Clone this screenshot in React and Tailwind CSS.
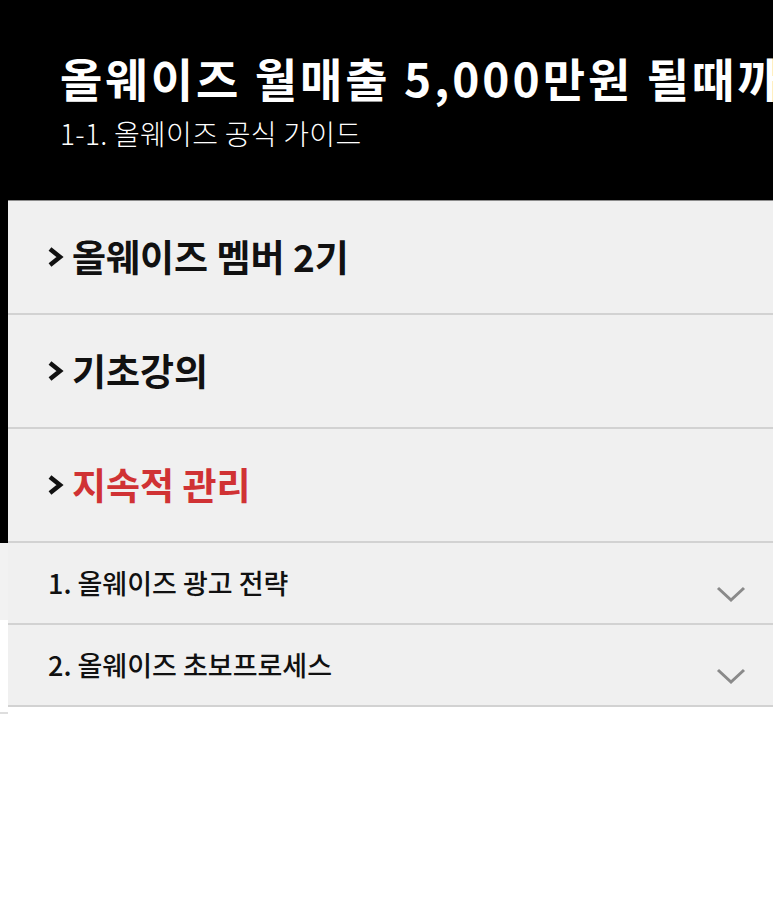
import React from 'react'

const font = { fontFamily: '"Noto Sans CJK KR", "Noto Sans", sans-serif' }

const sections = [
  { id: 1, title: '올웨이즈 멤버 2기', active: false },
  { id: 2, title: '기초강의', active: false },
  { id: 3, title: '지속적 관리', active: true },
]

const lessons = [
  { id: 1, title: '1. 올웨이즈 광고 전략' },
  { id: 2, title: '2. 올웨이즈 초보프로세스' },
]

function Arrow() {
  return (
    <svg width="17" height="22" viewBox="0 0 17 22" className="shrink-0">
      <polyline points="3,3 13,11 3,19" fill="none" stroke="#111" strokeWidth="4.5" strokeLinejoin="miter" />
    </svg>
  )
}

function ChevronDown() {
  return (
    <svg width="30" height="17" viewBox="0 0 30 17" className="shrink-0 mt-[22px]">
      <polyline points="2,2 15,14 28,2" fill="none" stroke="#8a8a8a" strokeWidth="3" />
    </svg>
  )
}

export default function App() {
  return (
    <div className="flex w-[773px] min-h-[902px] bg-white" style={font}>
      {/* left edge strip */}
      <div className="w-[8px] shrink-0 flex flex-col">
        <div className="h-[543px] bg-black" />
        <div className="h-[77px] bg-[#f2f2f2]" />
        <div className="h-[92px] bg-white" />
        <div className="h-[2px] bg-[#dedede]" />
      </div>

      <div className="flex-1 min-w-0 flex flex-col">
        <div className="h-[200px] bg-black overflow-hidden pl-[52px] pt-[50px]">
          <h1 className="text-[46px] leading-[54px] font-bold tracking-[3px] text-white whitespace-nowrap">
            올웨이즈 월매출 5,000만원 될때까지
          </h1>
          <p className="mt-[12px] text-[28px] leading-[34px] font-light tracking-[0.3px] text-white whitespace-nowrap">
            1-1. 올웨이즈 공식 가이드
          </p>
        </div>

        <div className="bg-[#f0f0f0] border-t border-[#8c8c8c]">
          {sections.map((s) => (
            <div key={s.id} className="h-[114px] flex items-center pl-[39px] border-b-2 border-[#d2d2d2]">
              <Arrow />
              <span className={`ml-[8px] text-[37px] font-bold whitespace-nowrap ${s.active ? 'text-[#d03234]' : 'text-[#111]'}`}>
                {s.title}
              </span>
            </div>
          ))}
          {lessons.map((l) => (
            <div key={l.id} className="h-[82px] flex items-center justify-between pl-[40px] pr-[27px] border-b-2 border-[#d2d2d2]">
              <span className="text-[27px] font-medium text-[#111] whitespace-nowrap">{l.title}</span>
              <ChevronDown />
            </div>
          ))}
        </div>
      </div>
    </div>
  )
}
